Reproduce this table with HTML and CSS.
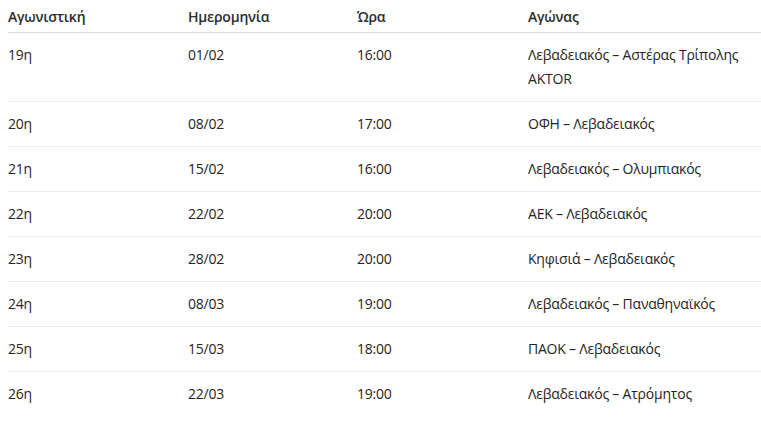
FILE: index.html
```html
<!DOCTYPE html>
<html lang="el">
<head>
<meta charset="utf-8">
<link rel="stylesheet" href="styles.css">
</head>
<body>
<table class="fixtures">
  <colgroup>
    <col class="c1"><col class="c2"><col class="c3"><col class="c4">
  </colgroup>
  <thead>
    <tr><th>Αγωνιστική</th><th>Ημερομηνία</th><th>Ώρα</th><th>Αγώνας</th></tr>
  </thead>
  <tbody>
    <tr><td>19η</td><td>01/02</td><td>16:00</td><td>Λεβαδειακός – Αστέρας Τρίπολης AKTOR</td></tr>
    <tr><td>20η</td><td>08/02</td><td>17:00</td><td>ΟΦΗ – Λεβαδειακός</td></tr>
    <tr><td>21η</td><td>15/02</td><td>16:00</td><td>Λεβαδειακός – Ολυμπιακός</td></tr>
    <tr><td>22η</td><td>22/02</td><td>20:00</td><td>ΑΕΚ – Λεβαδειακός</td></tr>
    <tr><td>23η</td><td>28/02</td><td>20:00</td><td>Κηφισιά – Λεβαδειακός</td></tr>
    <tr><td>24η</td><td>08/03</td><td>19:00</td><td>Λεβαδειακός – Παναθηναϊκός</td></tr>
    <tr><td>25η</td><td>15/03</td><td>18:00</td><td>ΠΑΟΚ – Λεβαδειακός</td></tr>
    <tr><td>26η</td><td>22/03</td><td>19:00</td><td>Λεβαδειακός – Ατρόμητος</td></tr>
  </tbody>
</table>
</body>
</html>
```
FILE: styles.css
```css
html, body {
  margin: 0;
  padding: 0;
  background: #ffffff;
}
body {
  font-family: "Open Sans", "Noto Sans", sans-serif;
  font-size: 14px;
  line-height: 24px;
  letter-spacing: -0.22px;
  color: #242424;
}
.fixtures {
  margin-left: 8px;
  width: 753px;
  border-collapse: collapse;
  table-layout: fixed;
}
.c1 { width: 180px; }
.c2 { width: 169px; }
.c3 { width: 171px; }
.c4 { width: 233px; }
.fixtures th {
  text-align: left;
  font-weight: 600;
  padding: 5px 0 3px 0;
  border-bottom: 1px solid #dcdcdc;
  color: #2b2b2b;
}
.fixtures td {
  text-align: left;
  vertical-align: top;
  padding: 10px 0;
  border-bottom: 1px solid #ececec;
}
.fixtures tbody tr:last-child td {
  border-bottom: none;
}
```
